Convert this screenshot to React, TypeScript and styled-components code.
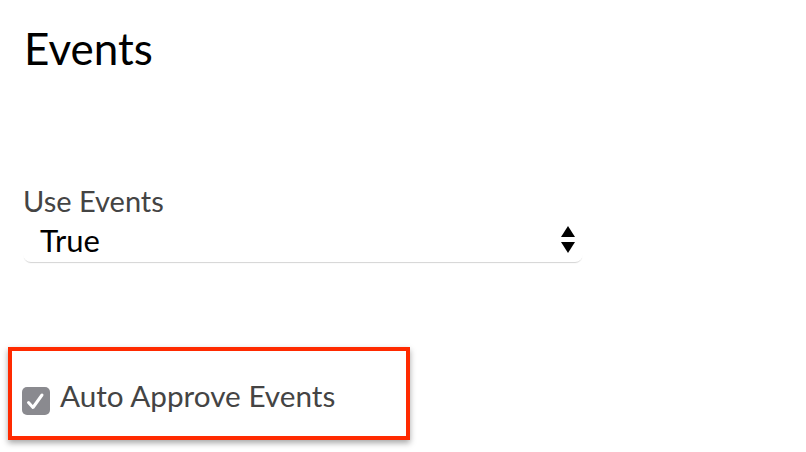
import React from "react";
import styled, { createGlobalStyle } from "styled-components";

const Global = createGlobalStyle`
  html, body { margin: 0; padding: 0; background: #fff; }
  body { font-family: Lato, "Open Sans", sans-serif; }
`;

const Page = styled.div`
  width: 806px;
  height: 452px;
  padding: 22px 0 0 24px;
  box-sizing: border-box;
  overflow: hidden;
`;

const Title = styled.h1`
  margin: 0;
  font-size: 44px;
  font-weight: 400;
  color: #000;
  line-height: 52px;
`;

const Field = styled.div`
  margin-top: 110px;
  width: 560px;
  margin-left: -1px;
`;

const Label = styled.div`
  font-size: 29px;
  color: #444;
  line-height: 34px;
`;

const Select = styled.div`
  display: flex;
  align-items: center;
  justify-content: space-between;
  height: 44px;
  padding: 0 7px 0 17px;
  border-radius: 0 0 8px 8px;
  box-shadow: 0 2px 1px -1px #d4d4d4;
  font-size: 31px;
  color: #000;
`;

const Highlight = styled.div`
  margin: 85px 0 0 -16px;
  width: 402px;
  height: 93px;
  box-sizing: border-box;
  border: 4px solid #ff2a00;
  box-shadow: 0 3px 6px rgba(0,0,0,0.35);
  display: flex;
  align-items: center;
  padding: 4px 0 0 10px;
  gap: 10px;
`;

const Box = styled.span`
  width: 28px;
  height: 28px;
  margin-top: 10px;
  border-radius: 5px;
  background: #8a8a8f;
  display: flex;
`;

const CheckLabel = styled.span`
  font-size: 29.7px;
  color: #444;
`;

export default function App() {
  return (
    <>
      <Global />
      <Page>
        <Title>Events</Title>
        <Field>
          <Label>Use Events</Label>
          <Select>
            <span>True</span>
            <svg width="16" height="30" viewBox="0 0 16 30">
              <path d="M8 1 L15 12 L1 12 Z" fill="#000" />
              <path d="M1 17 L15 17 L8 28 Z" fill="#000" />
            </svg>
          </Select>
        </Field>
        <Highlight>
          <Box>
            <svg width="28" height="28" viewBox="0 0 28 28">
              <path d="M6.5 15.5 L11 20.5 L20 8" stroke="#fff" strokeWidth="3" fill="none" strokeLinecap="round" strokeLinejoin="round" />
            </svg>
          </Box>
          <CheckLabel>Auto Approve Events</CheckLabel>
        </Highlight>
      </Page>
    </>
  );
}
